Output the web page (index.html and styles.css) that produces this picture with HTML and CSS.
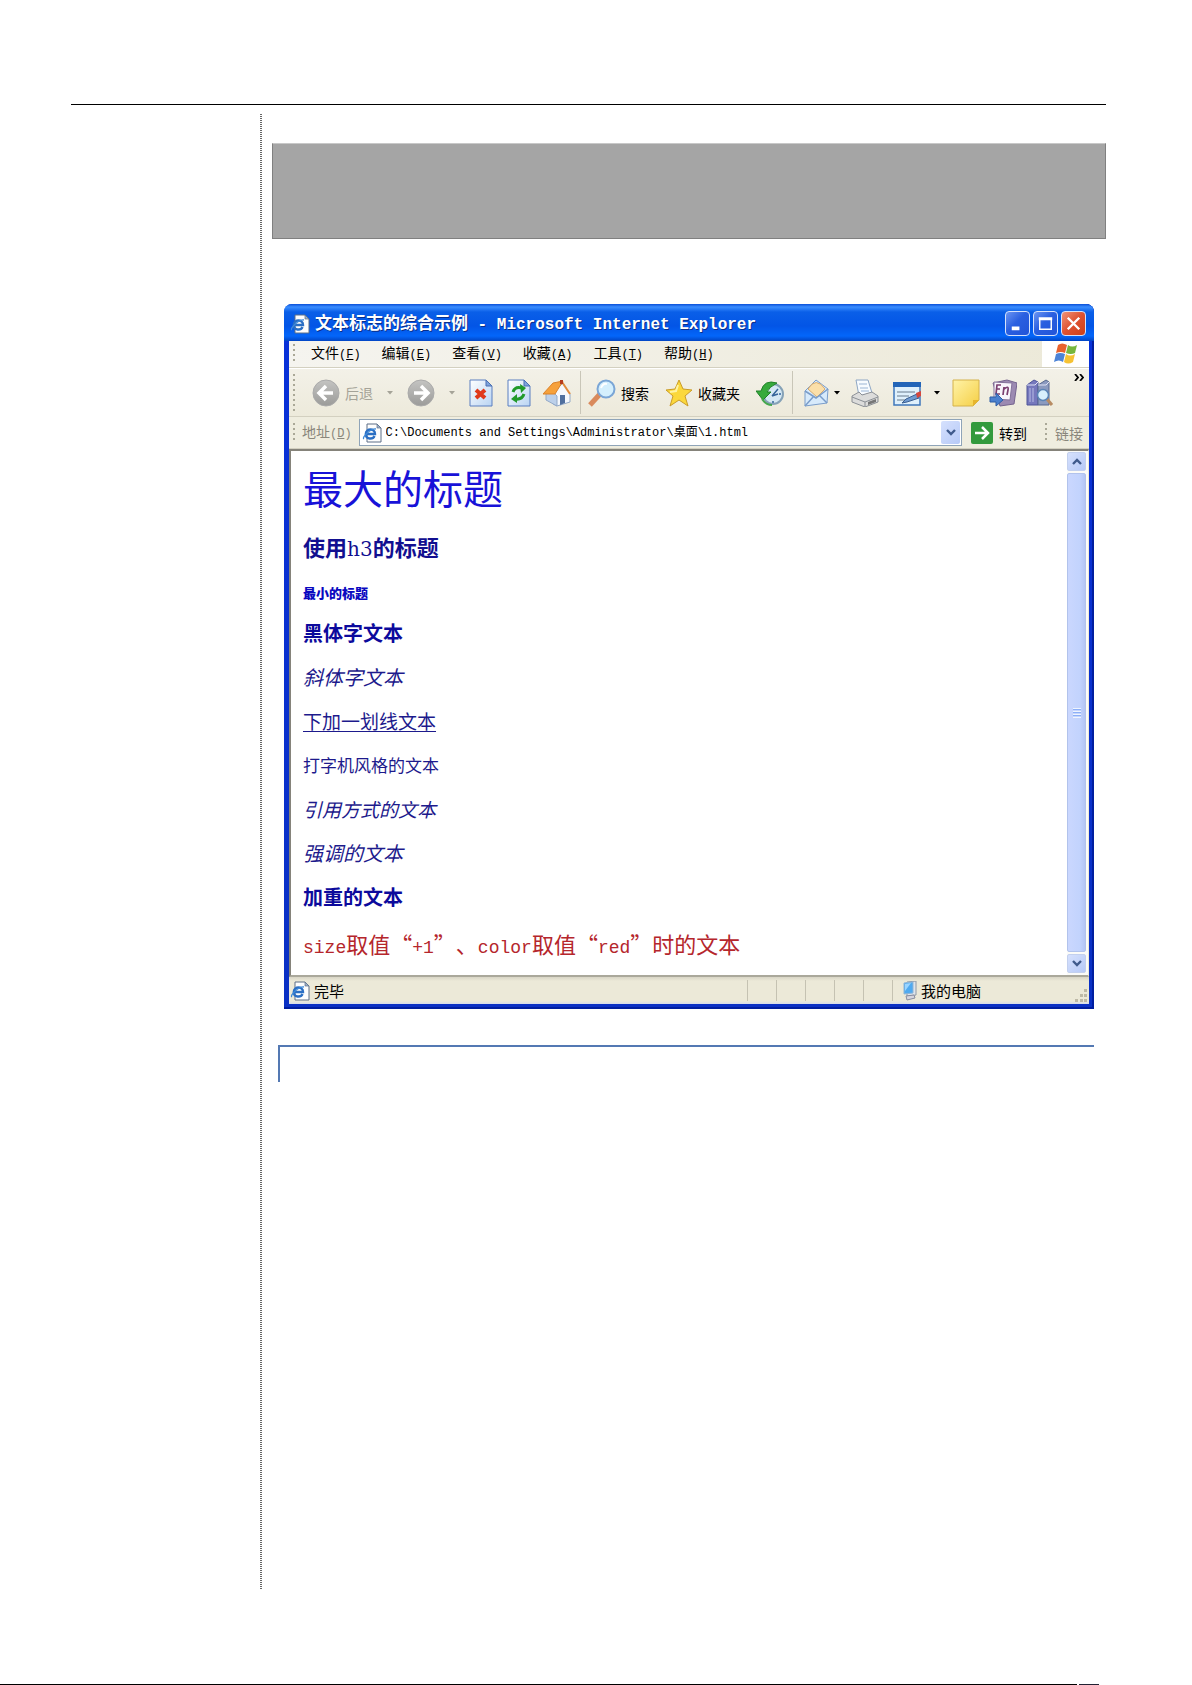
FILE: index.html
```html
<!DOCTYPE html>
<html lang="zh-CN">
<head>
<meta charset="utf-8">
<title>文本标志的综合示例</title>
<link rel="stylesheet" href="styles.css">
</head>
<body>
<svg width="0" height="0" class="defs" aria-hidden="true">
  <defs>
    <linearGradient id="grey" x1="0" y1="0" x2="0" y2="1"><stop offset="0" stop-color="#c4c4c2"/><stop offset="1" stop-color="#9b9b99"/></linearGradient>
    <linearGradient id="doc" x1="0" y1="0" x2="1" y2="1"><stop offset="0" stop-color="#fff"/><stop offset="1" stop-color="#b9d4f3"/></linearGradient>
    <linearGradient id="yellow" x1="0" y1="0" x2="1" y2="1"><stop offset="0" stop-color="#fff3a8"/><stop offset="1" stop-color="#f5cf45"/></linearGradient>
    <symbol id="ie" viewBox="0 0 20 20">
      <path d="M5 1h10l4 4v14H5z" fill="#fdfdfd" stroke="#5c6f87"/><path d="M15 1v4h4z" fill="#9fb3cc" stroke="#5c6f87" stroke-width=".7"/>
      <path d="M3.500 11h9.500c0-6-9-6-9.200 0 0 5.500 7 5.800 8.700 2" fill="none" stroke="#2b6fc4" stroke-width="2.400"/>
      <path d="M2 16c-3-1 7-11 12-10" fill="none" stroke="#3f8ad8" stroke-width="1.300"/>
    </symbol>
    <symbol id="caret" viewBox="0 0 6 4"><path d="M0 0h6L3 3.500z" fill="currentColor"/></symbol>
  </defs>
</svg>
<div class="page">
  <header class="page-head"></header>
  <div class="columns">
    <aside class="margin-column"></aside>
    <main class="body-column">
      <div class="banner"></div>
      <section class="window">
        <div class="titlebar">
          <svg class="ico-small"><use href="#ie"/></svg>
          <h1 class="title">文本标志的综合示例<span class="title-latin"> - Microsoft Internet Explorer</span></h1>
          <div class="caption">
            <button class="cap" aria-label="最小化"><svg viewBox="0 0 24 24"><path d="M6 17h8" stroke="#fff" stroke-width="4"/></svg></button>
            <button class="cap" aria-label="最大化"><svg viewBox="0 0 24 24"><path d="M6 7h12v11H6z" fill="none" stroke="#fff" stroke-width="1.500"/><path d="M5 7h14" stroke="#fff" stroke-width="3"/></svg></button>
            <button class="cap close" aria-label="关闭"><svg viewBox="0 0 24 24"><path d="M6 6l12 12M18 6L6 18" stroke="#fff" stroke-width="2.500"/></svg></button>
          </div>
        </div>
        <nav class="menubar">
          <span class="grip"></span>
          <div class="menus">
            <button>文件<span class="key">(<u>F</u>)</span></button>
            <button>编辑<span class="key">(<u>E</u>)</span></button>
            <button>查看<span class="key">(<u>V</u>)</span></button>
            <button>收藏<span class="key">(<u>A</u>)</span></button>
            <button>工具<span class="key">(<u>T</u>)</span></button>
            <button>帮助<span class="key">(<u>H</u>)</span></button>
          </div>
          <div class="flag">
            <svg viewBox="0 0 24 22"><path d="M4 2q4-3 9 0l-2 8q-4-2-9 0z" fill="#e8622d"/><path d="M14 2q4 3 9 0l-2 8q-4 2-9 0z" fill="#76b63d"/><path d="M2 11q4-2 9 0l-2 8q-4-3-9 0z" fill="#4c83d6"/><path d="M12 11q4 3 9 0l-2 8q-5 3-9 0z" fill="#f6c233"/></svg>
          </div>
        </nav>
        <div class="toolbar">
          <span class="grip"></span>
          <div class="tools nav-tools">
            <button class="off"><svg class="ico" viewBox="0 0 28 28"><circle cx="14" cy="14" r="13" fill="url(#grey)" stroke="#aaa"/><path d="M14 7l-7 7 7 7M8 14h13" fill="none" stroke="#fff" stroke-width="3.500"/></svg>后退</button>
            <span class="caret wide off"><svg><use href="#caret"/></svg></span>
            <button class="off" aria-label="前进"><svg class="ico" viewBox="0 0 28 28"><circle cx="14" cy="14" r="13" fill="url(#grey)" stroke="#aaa"/><path d="M14 7l7 7-7 7M20 14H7" fill="none" stroke="#fff" stroke-width="3.500"/></svg></button>
            <span class="caret wide off"><svg><use href="#caret"/></svg></span>
          </div>
          <div class="tools page-tools">
            <button aria-label="停止"><svg class="ico" viewBox="0 0 28 28"><path d="M3 1h16l6 6v20H3z" fill="url(#doc)" stroke="#5a7fc0"/><path d="M19 1v6h6z" fill="#7da3dc" stroke="#4a6fb3"/><path d="M9 11l9 8M18 11l-9 8" stroke="#e0391b" stroke-width="4"/></svg></button>
            <button aria-label="刷新"><svg class="ico" viewBox="0 0 28 28"><path d="M3 1h16l6 6v20H3z" fill="url(#doc)" stroke="#5a7fc0"/><path d="M19 1v6h6z" fill="#7da3dc" stroke="#4a6fb3"/><path d="M8 13q2-6 9-4M19 15q-2 6-9 5" fill="none" stroke="#219a2b" stroke-width="3"/><path d="M15 5l6 4-5 5zM12 15l-6 5 6 4z" fill="#219a2b"/></svg></button>
            <button aria-label="主页"><svg class="ico" viewBox="0 0 28 28"><path d="M10 14L20 4l7 11v8l-13 4-4-2z" fill="#f5f8fd" stroke="#93a9c7"/><path d="M3 15l6-3 5 5v10L3 21z" fill="#bcd0ea" stroke="#93a9c7"/><path d="M0 15L10 4l10-2-8 13z" fill="#f6a13b" stroke="#d9812b"/><path d="M19 3l8 12" stroke="#e28b3c" stroke-width="2"/><path d="M17 1h3v4h-3z" fill="#b63c1c"/><path d="M17 16h5v8l-5 2z" fill="#506f9e"/></svg></button>
          </div>
          <div class="tools find-tools">
            <button><svg class="ico" viewBox="0 0 28 28"><path d="M2 26l10-11" stroke="#d98a5c" stroke-width="5"/><circle cx="18" cy="10" r="8.500" fill="#d4effd" stroke="#7ba6d6" stroke-width="2"/><path d="M13 9q2-5 6-4" fill="none" stroke="#fff" stroke-width="2"/></svg>搜索</button>
            <button><svg class="ico" viewBox="0 0 28 28"><path d="M14 1l4 9 9 1-7 6 3 10-9-6-9 6 3-10-7-6 9-1z" fill="#fbd83c" stroke="#c99b28"/><path d="M13 6l-2 6-6 1" fill="none" stroke="#fff4a5" stroke-width="2"/></svg>收藏夹</button>
            <button aria-label="历史"><svg class="ico" viewBox="0 0 28 28"><circle cx="17" cy="15" r="10" fill="#d5e8f4" stroke="#86a2b7" stroke-width="2"/><path d="M16 17l6-7M16 17l6-2M17 22v2M25 15h-2" stroke="#35649a" stroke-width="1.500"/><path d="M21 4Q8 0 5 12H0l7 9 8-8h-4q2-5 10-9z" fill="#36aa3c" stroke="#218029"/><path d="M6 20q4 6 10 6" fill="none" stroke="#46a84e" stroke-width="2"/></svg></button>
          </div>
          <div class="tools app-tools">
            <button aria-label="邮件"><svg class="ico" viewBox="0 0 28 28"><path d="M2 12L13 1l12 9-1 14-22 3z" fill="#d7eafb" stroke="#7a9dca"/><path d="M5 10q8-13 17 0l-8 8z" fill="#fbdfa9" stroke="#d7ac70"/><path d="M2 12l11 7 12-9M2 27l9-10M24 24l-8-8" fill="none" stroke="#7a9dca" stroke-width="1.500"/></svg></button>
            <span class="caret"><svg><use href="#caret"/></svg></span>
            <button class="print" aria-label="打印"><svg class="ico" viewBox="0 0 28 28"><path d="M5 1h12l4 13-13 3z" fill="#f7fbff" stroke="#8ea6c4"/><path d="M8 5h8M9 9h8M10 12h8" stroke="#9bb5d5"/><path d="M1 17l7-4 3 3 10-3 6 4v6l-13 5L1 23z" fill="#dcdcdb" stroke="#8b8f95"/><path d="M1 18l13 5 13-5M14 23v5" fill="none" stroke="#8b8f95"/><path d="M17 23l8-3v3l-8 3z" fill="#777"/></svg></button>
            <button class="edit" aria-label="编辑"><svg class="ico" viewBox="0 0 28 28"><path d="M1 4h26v22H1z" fill="#dff0fc" stroke="#3f77bb" stroke-width="1.500"/><path d="M0 3h28v5H0z" fill="#2264b8"/><path d="M4 13h18M4 17h12M4 21h8" stroke="#687a8c"/><path d="M9 24l4-4 11-5 2 4-12 4z" fill="#6f9bd1" stroke="#395e91"/><path d="M23 14l5-2v5l-4 2z" fill="#d6473d"/></svg></button>
            <span class="caret wide"><svg><use href="#caret"/></svg></span>
            <button aria-label="便笺"><svg class="ico" viewBox="0 0 28 28"><path d="M1 1h26v20l-6 6H1z" fill="url(#yellow)" stroke="#d5b24a"/><path d="M21 27v-6h6z" fill="#e6b52e"/></svg></button>
            <button aria-label="翻译"><svg class="ico" viewBox="0 0 28 28"><path d="M4 4l14-3 10 3-3 21-14 2z" fill="#9c8ab2" stroke="#75648e"/><path d="M5 3l18 1-2 17-16-1z" fill="#f8f5fb" stroke="#84729a"/><path d="M12 6H8l-1 9h4M8 10h3M14 16l1-8M15 10q5-4 4 1l-1 5" fill="none" stroke="#7b3f70" stroke-width="1.700"/><path d="M1 18h6v-4l7 7-7 6v-4H1z" fill="#4b80ce" stroke="#2d5da5"/></svg></button>
            <button aria-label="信息检索"><svg class="ico" viewBox="0 0 28 28"><path d="M1 6l7-5 4 2v23H1z" fill="#7678bd" stroke="#4f5499"/><path d="M12 6l8-5 3 2v23H12z" fill="#8b9abf" stroke="#58698f"/><path d="M1 6h8l3-3M12 6h8l3-3" fill="none" stroke="#dfe2f4"/><path d="M4 9v14M7 9v14" stroke="#b9bde6"/><path d="M21 20l5 6" stroke="#b78b63" stroke-width="3"/><circle cx="17" cy="16" r="5.500" fill="#d8effc" stroke="#5b84b6" stroke-width="1.500"/></svg></button>
          </div>
          <button class="more" aria-label="更多"><svg viewBox="0 0 10 7"><path d="M1 0l3 3.500L1 7M6 0l3 3.500L6 7" fill="none" stroke="#000" stroke-width="1.800"/></svg></button>
        </div>
        <form class="addressbar">
          <span class="grip"></span>
          <label for="address">地址<span class="key">(<u>D</u>)</span></label>
          <div class="field">
            <svg class="ico-small"><use href="#ie"/></svg>
            <input id="address" type="text" value="C:\Documents and Settings\Administrator\桌面\1.html">
            <button type="button" class="drop" aria-label="展开"><svg viewBox="0 0 10 7"><path d="M1 1l4 4 4-4" fill="none" stroke="#3f5a8c" stroke-width="2.400"/></svg></button>
          </div>
          <button type="button" class="go"><svg viewBox="0 0 22 22"><rect width="22" height="22" rx="2" fill="#339a3d"/><path d="M4 11h13M11 5l6 6-6 6" fill="none" stroke="#fff" stroke-width="2.500"/></svg>转到</button>
          <span class="grip"></span>
          <span class="links">链接</span>
        </form>
        <div class="client">
          <article class="document">
            <p class="largest">最大的标题</p>
            <h3 class="third">使用<span class="h3-latin">h3</span>的标题</h3>
            <h6 class="smallest">最小的标题</h6>
            <p><b>黑体字文本</b></p>
            <p><i>斜体字文本</i></p>
            <p class="medium"><u>下加一划线文本</u></p>
            <p class="teletype"><tt>打字机风格的文本</tt></p>
            <p class="medium"><cite>引用方式的文本</cite></p>
            <p><em>强调的文本</em></p>
            <p><strong>加重的文本</strong></p>
            <p class="red"><span class="latin">size</span>取值“<span class="latin">+1</span>”、<span class="latin">color</span>取值“<span class="latin">red</span>”时的文本</p>
          </article>
          <div class="scrollbar">
            <button class="scroll-end" aria-label="向上"><svg viewBox="0 0 10 7"><path d="M1 6l4-4 4 4" fill="none" stroke="#3f5a8c" stroke-width="2.400"/></svg></button>
            <div class="thumb"><span class="ridges"></span></div>
            <button class="scroll-end" aria-label="向下"><svg viewBox="0 0 10 7"><path d="M1 1l4 4 4-4" fill="none" stroke="#3f5a8c" stroke-width="2.400"/></svg></button>
          </div>
        </div>
        <footer class="status">
          <div class="state"><svg class="ico-small"><use href="#ie"/></svg>完毕</div>
          <span class="cell"></span><span class="cell"></span><span class="cell"></span><span class="cell"></span><span class="cell"></span>
          <div class="zone"><svg class="pc" viewBox="0 0 14 20"><path d="M4 1l9-1v14l-9 1z" fill="#dfe4ea" stroke="#8f9aa7"/><path d="M1 2l9-1v11l-9 1z" fill="#4faaf0" stroke="#8fb5d7"/><path d="M2 3l6-1-6 8z" fill="#9bd5ff"/><path d="M3 15l8-1 1 3-8 2z" fill="#d5d5dd" stroke="#888da0"/></svg>我的电脑</div>
          <svg class="sizer" viewBox="0 0 13 13"><path d="M9 0h3v3H9zM5 5h3v3H5zM9 5h3v3H9zM0 10h3v3H0zM5 10h3v3H5zM9 10h3v3H9z" fill="#bdb9a6"/></svg>
        </footer>
      </section>
      <div class="callout"></div>
    </main>
  </div>
  <footer class="page-foot"><span class="foot-line"></span><span class="foot-end"></span></footer>
</div>
</body>
</html>
```
FILE: styles.css
```css
* { box-sizing: border-box; }

body {
  margin: 0;
  background: #fff;
  color: #000;
  font: 14px/20px "Noto Sans CJK SC", sans-serif;
}

p, h1, h3, h6 { margin: 0; }
svg { display: block; flex: none; }
.defs { position: absolute; }

button {
  display: flex;
  align-items: center;
  padding: 0;
  border: 0;
  background: none;
  color: inherit;
  font: inherit;
  white-space: nowrap;
}

/* Page frame */
.page { display: flex; flex-direction: column; min-height: 100vh; }
.page-head { height: 105px; margin: 0 86px 9px 71px; border-bottom: 1px solid #000; }
.columns { display: flex; flex: 1; margin: 0 86px 95px 71px; }
.margin-column {
  flex: none;
  width: 191px;
  background: repeating-linear-gradient(#666 0 1px, #fff 1px 2px) right / 2px 100% no-repeat;
}
.body-column { flex: 1; min-width: 0; padding: 29px 0 0 10px; }
.banner {
  height: 96px;
  background: #a5a5a5;
  border: 1px solid #808080;
  border-top-color: #c8c8c8;
}
.callout {
  height: 37px;
  margin: 36px 12px 0 6px;
  border: solid #5479b3;
  border-width: 2px 0 0 2px;
}
.page-foot { display: flex; gap: 2px; height: 1px; margin-right: 93px; }
.foot-line { flex: 1; background: #000; }
.foot-end { width: 20px; background: #223; }

/* Browser window */
.window {
  margin: 65px 12px 0;
  padding: 0 5px 5px;
  border-radius: 8px 8px 0 0;
  background: linear-gradient(#0a55e0, #0831d9 40px, #0a30c4);
  box-shadow: inset 0 -2px #001ea0, inset -2px 0 #001ea0;
  overflow: hidden;
}
.ico-small { width: 20px; height: 20px; }
.key { font: 12px/20px "Liberation Mono", monospace; }

.titlebar {
  display: flex;
  align-items: center;
  gap: 5px;
  height: 37px;
  margin: 0 -5px;
  padding: 2px 8px 0 6px;
  background: linear-gradient(#0a4fd8, #3a8dff 3px, #0a5fe8 8px, #0355e6 22px, #0366fa 32px, #0245c4);
}
.title {
  flex: 1;
  color: #fff;
  font-size: 17px;
  line-height: 24px;
  white-space: pre;
  text-shadow: 1px 1px #0a2f8a;
}
.title-latin { font-family: "Liberation Mono", monospace; font-size: 16px; }
.caption { display: flex; gap: 3px; }
.cap {
  width: 25px;
  height: 25px;
  border: 1px solid #d5e2fb;
  border-radius: 4px;
  background: linear-gradient(135deg, #6b95f3, #2a5fe0 45%, #2154d8);
}
.close { background: linear-gradient(135deg, #ef9478, #de5130 50%, #cf4018); }

.grip {
  flex: none;
  width: 2px;
  height: 20px;
  background: repeating-linear-gradient(#aaa897 0 2px, transparent 2px 5px);
}

.menubar, .toolbar, .addressbar {
  display: flex;
  align-items: center;
  padding-left: 4px;
  background: #efeddf;
  border-bottom: 1px solid #d3d0c0;
}
.menubar { height: 27px; background: linear-gradient(90deg, #f5f4ef, #ece9d8); }
.menus { display: flex; flex: 1; gap: 21px; padding: 0 0 2px 16px; }
.menus button { align-items: baseline; }
.flag {
  display: flex;
  align-items: center;
  justify-content: center;
  align-self: stretch;
  width: 47px;
  background: #fff;
}
.flag svg { width: 24px; height: 22px; }

.toolbar { height: 49px; background: linear-gradient(#f3f1e8, #edeadb); border-top: 1px solid #fff; }
.toolbar .grip { height: 38px; }
.tools { display: flex; align-items: center; height: 43px; }
.tools button { gap: 5px; }
.ico { width: 28px; height: 28px; }
.nav-tools { gap: 2px; padding-left: 17px; }
.page-tools { gap: 10px; padding-right: 9px; border-right: 1px solid #c9c6b8; }
.find-tools { gap: 16px; padding: 0 8px 0 7px; border-right: 1px solid #c9c6b8; }
.app-tools { gap: 9px; padding-left: 10px; }
.app-tools .print { margin-left: 2px; }
.app-tools .edit { margin-left: 5px; }
.off { color: #a5a398; }
.caret { display: flex; justify-content: center; width: 6px; margin-left: -6px; }
.caret svg { width: 6px; height: 4px; }
.wide { width: 30px; margin: 0; }
.app-tools .wide { width: 13px; }
.more { align-self: flex-start; margin: 5px 5px 0 auto; }
.more svg { width: 10px; height: 7px; }

.addressbar { height: 32px; }
.addressbar label { margin: 0 7px; color: #8a877c; white-space: nowrap; }
.field {
  display: flex;
  align-items: center;
  flex: 1;
  height: 27px;
  padding: 0 1px 0 2px;
  background: #fff;
  border: 1px solid #8fa4b8;
}
.field input {
  flex: 1;
  min-width: 0;
  padding: 0 4px;
  border: 0;
  outline: 0;
  background: none;
  color: #000;
  font: 12px/20px "Liberation Mono", "Noto Sans CJK SC", monospace;
}
.drop, .scroll-end {
  justify-content: center;
  width: 19px;
  height: 23px;
  border-radius: 2px;
  background: linear-gradient(135deg, #d6e1fd, #b6c9f7);
}
.drop svg, .scroll-end svg { width: 10px; height: 7px; }
.go { gap: 6px; margin: 0 18px 0 9px; }
.go svg { width: 22px; height: 22px; }
.links { margin: 0 6px 0 8px; color: #8a877c; }

/* Document view */
.client {
  display: flex;
  background: #fff;
  border: solid #85837a;
  border-width: 2px 1px 2px 2px;
  border-right-color: #ece9d8;
  border-bottom-color: #aaa89b;
}
.document {
  flex: 1;
  padding: 10px 0 8px 12px;
  color: #1d1a8c;
  font-size: 20px;
  line-height: 44px;
  text-spacing-trim: space-all;
}
.document b, .document strong { color: #0c0a9c; font-weight: 700; }
.document .largest { color: #1812d8; font-size: 40px; line-height: 52px; }
.document .third { color: #120f90; font-size: 22px; line-height: 66px; }
.h3-latin { font-family: "DejaVu Serif", serif; font-size: 20px; font-weight: 400; line-height: 20px; }
.document .smallest { padding-bottom: 4px; color: #0a08c0; font-size: 13px; font-weight: 900; line-height: 28px; }
.document .medium { font-size: 19px; }
.document .medium u { text-underline-offset: 2px; }
.document .teletype { font-size: 17px; }
.teletype tt { font-family: inherit; font-size: inherit; }
.document .red { color: #b5262c; font-size: 22px; line-height: 48px; }
.latin { font-family: "Liberation Mono", monospace; font-size: 18px; line-height: 20px; }

.scrollbar { display: flex; flex-direction: column; gap: 2px; width: 21px; padding: 1px 2px 2px 0; background: #fbfbf8; }
.scroll-end { height: 19px; border: 1px solid #c3d0ee; }
.thumb {
  display: flex;
  align-items: center;
  justify-content: center;
  flex: 1;
  width: 19px;
  border: 1px solid #b2c3ec;
  border-radius: 2px;
  background: linear-gradient(90deg, #cad7fe, #c2d3fd 70%, #b3c5f5);
}
.ridges { width: 8px; height: 10px; background: repeating-linear-gradient(#eef4fe 0 1px, #8cb0f8 1px 2px, transparent 2px 3px); }

.status {
  display: flex;
  align-items: center;
  height: 27px;
  font-size: 15px;
  background: linear-gradient(#d8d5c6, #ece9d8 4px, #ece9d8 24px, #d6dcea);
}
.state { display: flex; align-items: center; flex: 1; gap: 4px; padding-left: 1px; }
.cell { width: 29px; height: 21px; border-left: 1px solid #c5c2b2; }
.zone { display: flex; align-items: center; gap: 4px; width: 183px; height: 21px; padding-left: 10px; border-left: 1px solid #c5c2b2; }
.pc { width: 14px; height: 20px; }
.sizer { align-self: flex-end; width: 13px; height: 13px; margin: 0 1px 2px 0; }
```
